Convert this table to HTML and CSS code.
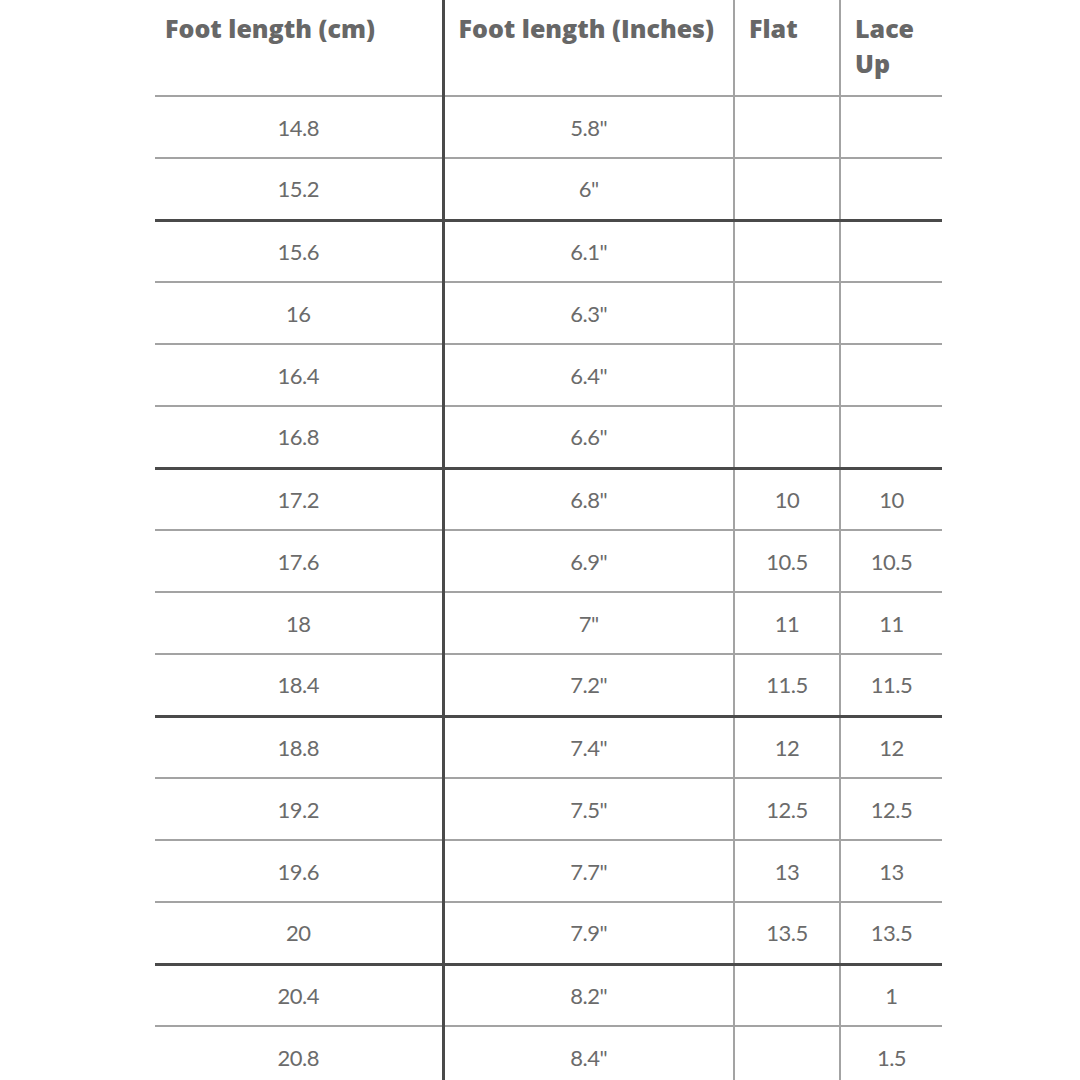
FILE: index.html
```html
<!DOCTYPE html>
<html lang="en">
<head>
<meta charset="utf-8">
<title>Size chart</title>
<link rel="stylesheet" href="styles.css">
</head>
<body>
<div class="page">
<table class="chart">
  <colgroup>
    <col class="c1"><col class="c2"><col class="c3"><col class="c4">
  </colgroup>
  <thead>
    <tr>
      <th class="cm">Foot length (cm)</th>
      <th>Foot length (Inches)</th>
      <th>Flat</th>
      <th>Lace<br>Up</th>
    </tr>
  </thead>
  <tbody>
    <tr><td class="cm">14.8</td><td>5.8"</td><td></td><td></td></tr>
    <tr class="end"><td class="cm">15.2</td><td>6"</td><td></td><td></td></tr>
    <tr><td class="cm">15.6</td><td>6.1"</td><td></td><td></td></tr>
    <tr><td class="cm">16</td><td>6.3"</td><td></td><td></td></tr>
    <tr><td class="cm">16.4</td><td>6.4"</td><td></td><td></td></tr>
    <tr class="end"><td class="cm">16.8</td><td>6.6"</td><td></td><td></td></tr>
    <tr><td class="cm">17.2</td><td>6.8"</td><td>10</td><td>10</td></tr>
    <tr><td class="cm">17.6</td><td>6.9"</td><td>10.5</td><td>10.5</td></tr>
    <tr><td class="cm">18</td><td>7"</td><td>11</td><td>11</td></tr>
    <tr class="end"><td class="cm">18.4</td><td>7.2"</td><td>11.5</td><td>11.5</td></tr>
    <tr><td class="cm">18.8</td><td>7.4"</td><td>12</td><td>12</td></tr>
    <tr><td class="cm">19.2</td><td>7.5"</td><td>12.5</td><td>12.5</td></tr>
    <tr><td class="cm">19.6</td><td>7.7"</td><td>13</td><td>13</td></tr>
    <tr class="end"><td class="cm">20</td><td>7.9"</td><td>13.5</td><td>13.5</td></tr>
    <tr><td class="cm">20.4</td><td>8.2"</td><td></td><td>1</td></tr>
    <tr><td class="cm">20.8</td><td>8.4"</td><td></td><td>1.5</td></tr>
  </tbody>
</table>
</div>
</body>
</html>
```

FILE: styles.css
```css
html, body {
  margin: 0;
  padding: 0;
  background: #ffffff;
  height: 1080px;
  overflow: hidden;
}
.page {
  padding-left: 155px;
}
.chart {
  border-collapse: collapse;
  table-layout: fixed;
  width: 787px;
  font-family: "Lato", "Open Sans", sans-serif;
  color: #6b6b6b;
}
.c1 { width: 288px; }
.c2 { width: 291px; }
.c3 { width: 106px; }
.c4 { width: 102px; }
.chart th {
  height: 96px;
  box-sizing: border-box;
  padding: 11px 14px 0 14px;
  vertical-align: top;
  text-align: left;
  font-family: "Open Sans", "Lato", sans-serif;
  font-size: 25px;
  font-weight: 800;
  line-height: 35px;
  letter-spacing: 0;
  color: #676767;
  border-bottom: 2px solid #a3a3a3;
  border-left: 2px solid #a3a3a3;
}
.chart th.cm {
  padding-left: 10px;
  border-left: none;
}
.chart td {
  height: 62px;
  box-sizing: border-box;
  padding: 0;
  text-align: center;
  vertical-align: middle;
  font-size: 22px;
  font-weight: 400;
  letter-spacing: -0.5px;
  border-bottom: 2px solid #a3a3a3;
  border-left: 2px solid #a3a3a3;
}
.chart td.cm {
  border-left: none;
}
.chart th:nth-child(2),
.chart td:nth-child(2) {
  border-left: 3px solid #4a4a4a;
}
.chart tr.end td {
  border-bottom: 3px solid #4a4a4a;
}
```
